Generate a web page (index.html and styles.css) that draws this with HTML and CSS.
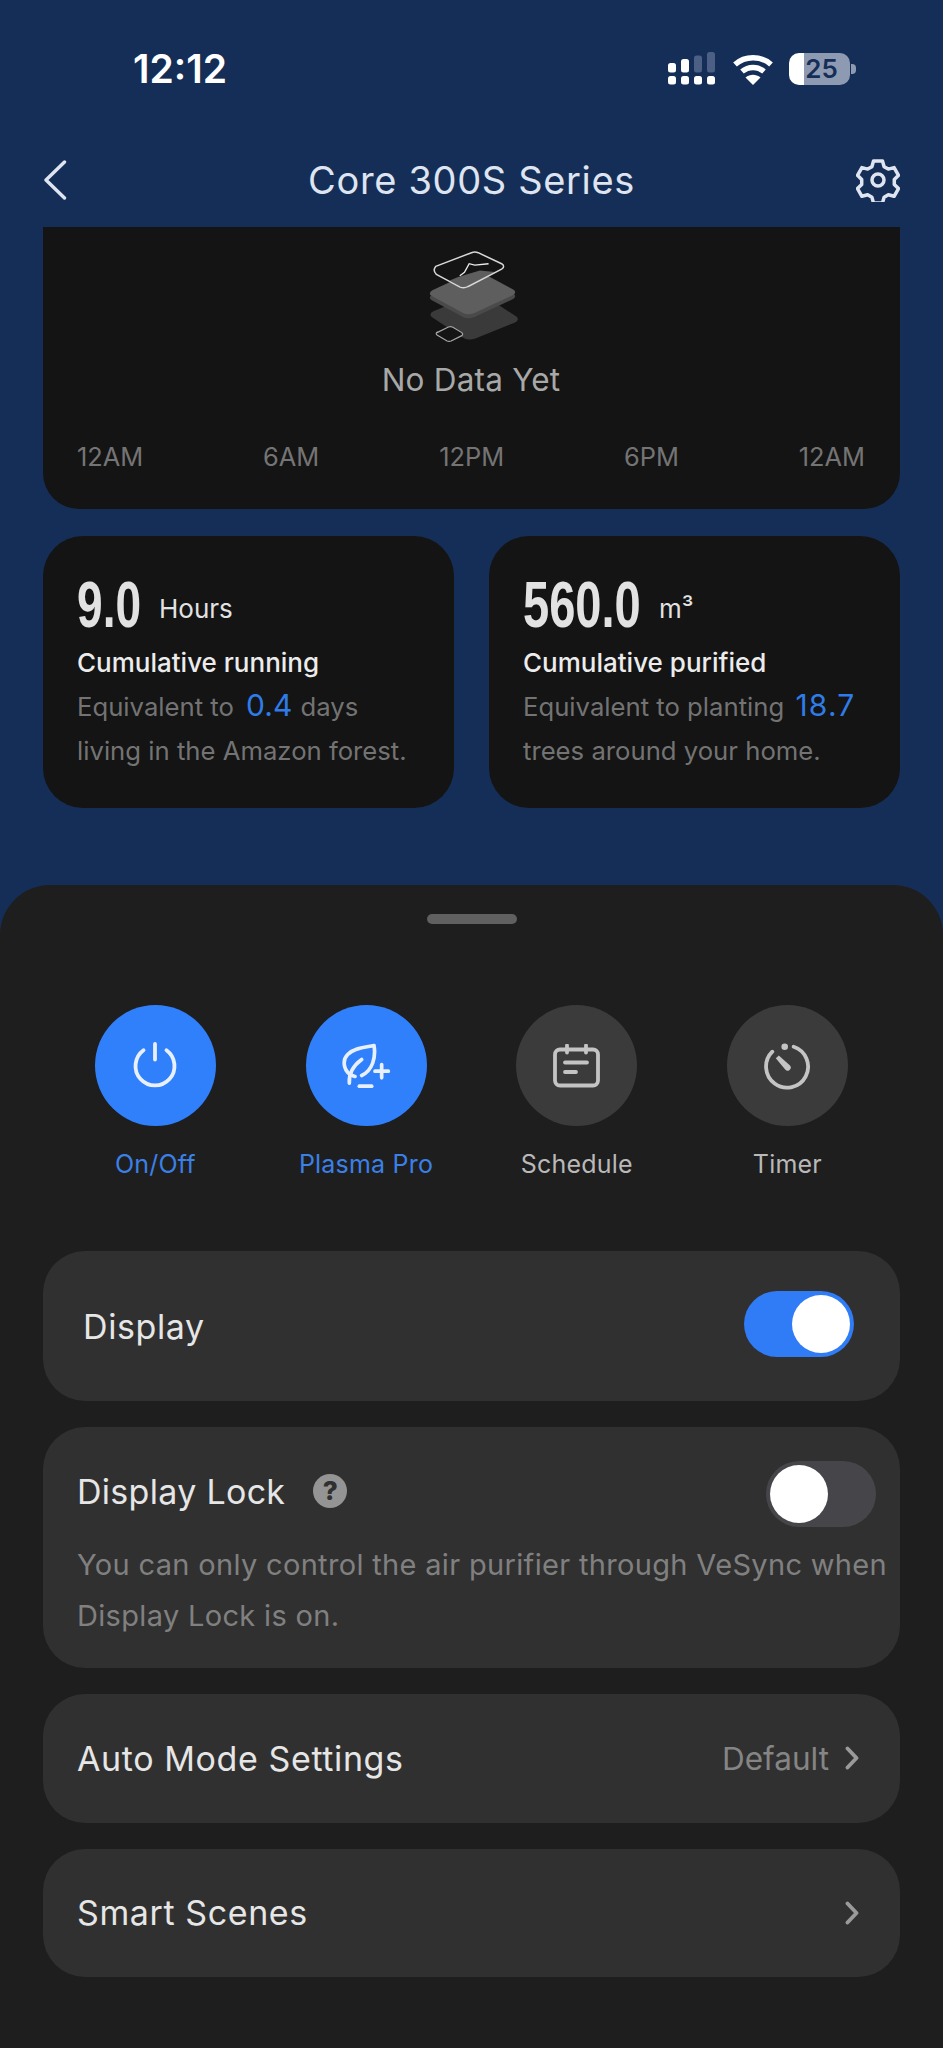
FILE: index.html
```html
<!DOCTYPE html>
<html lang="en">
<head>
<meta charset="utf-8">
<title>Core 300S Series</title>
<link rel="stylesheet" href="styles.css">
</head>
<body>
<div class="app">
  <header class="statusbar">
    <span class="time">12:12</span>
    <div class="status-icons">
      <svg class="signal" width="48" height="34" viewBox="0 0 48 34"><g fill="#fff"><rect x="0" y="24" width="8" height="8.500" rx="2.500"/><rect x="13" y="24" width="8" height="8.500" rx="2.500"/><rect x="26" y="24" width="8" height="8.500" rx="2.500"/><rect x="39" y="24" width="8" height="8.500" rx="2.500"/><rect x="0" y="11" width="8" height="9.500" rx="2.500"/><rect x="13" y="7" width="8" height="13.500" rx="2.500"/></g><g fill="#4b6084"><rect x="26" y="3.500" width="8" height="17" rx="2.500"/><rect x="39" y="0" width="8" height="20.500" rx="2.500"/></g></svg>
      <svg class="wifi" width="42" height="32" viewBox="0 0 42 32"><g fill="none" stroke="#fff" stroke-width="5.500"><path d="M3 11.500C13 2.500 29 2.500 39 11.500"/><path d="M10 18.500C16.500 13 25.500 13 32 18.500"/></g><path d="M13.500 24.500C18 20.800 24 20.800 28.500 24.500L21 32Z" fill="#fff"/></svg>
      <div class="battery"><span class="battery-num">25</span><i class="battery-nub"></i></div>
    </div>
  </header>
  <nav class="nav">
    <svg class="back" width="24" height="40" viewBox="0 0 24 40"><path d="M21.500 2 3 20l18.500 18" fill="none" stroke="#dfe5f0" stroke-width="3.400" stroke-linecap="round" stroke-linejoin="round"/></svg>
    <h1 class="title">Core 300S Series</h1>
    <svg class="gear" width="44" height="44" viewBox="0 0 44 44"><g fill="none" stroke="#dfe5f0" stroke-width="3.500" stroke-linejoin="round"><path d="M17.500 3h9l1.600 5.700 4.200 2.400 5.800-1.500 4.400 7.700-4.200 4.200v4.900l4.200 4.200-4.400 7.700-5.800-1.500-4.200 2.400-1.600 5.700h-9l-1.600-5.700-4.200-2.400-5.800 1.500-4.400-7.700 4.200-4.200v-4.900L1.500 17.300l4.400-7.700 5.800 1.500 4.200-2.400Z"/><circle cx="22" cy="22" r="6"/></g></svg>
  </nav>
  <section class="chart">
    <svg class="empty-art" width="97" height="99" viewBox="130 50 290 296">
      <rect width="1" height="1" rx=".13" transform="matrix(158 -64 124 82 142 250)" fill="#3a3a3a"/>
      <rect width="1" height="1" rx=".13" transform="matrix(150 -70 126 68 140 200)" fill="#4a4a4a"/>
      <rect width="1" height="1" rx=".13" transform="matrix(150 -70 126 68 140 188)" fill="#5e5e5e"/>
      <path d="M168 108 275 67q10-4 20 0l70 33q12 8 0 16L265 168q-12 7-24 2L170 132q-12-12-2-24Z" fill="#141414"/>
      <path d="M210 150 240 168q12 5 25-2L345 125 300 120 235 140Z" fill="#5e5e5e"/>
      <path d="M168 108 275 67q10-4 20 0l70 33q12 8 0 16L265 168q-12 7-24 2L170 132q-12-12-2-24Z" fill="none" stroke="#d8d8d8" stroke-width="4.500"/>
      <path d="M240 136 254 126 268 100 285 104 326 100" fill="none" stroke="#ececec" stroke-width="4"/>
      <path d="M172 306 206 289q6-2 12 0l28 17q5 5 0 9l-32 16q-6 2-12 0l-30-18q-5-5 0-8Z" fill="#141414" stroke="#a8a8a8" stroke-width="3.500"/>
    </svg>
    <p class="empty-text">No Data Yet</p>
    <div class="axis"><span>12AM</span><span>6AM</span><span>12PM</span><span>6PM</span><span>12AM</span></div>
  </section>
  <section class="stats">
    <article class="stat">
      <div class="stat-head"><span class="stat-value stat-value-short">9.0</span><span class="stat-unit">Hours</span></div>
      <div class="stat-title">Cumulative running</div>
      <p class="stat-note">Equivalent to <b class="hl">0.4</b> days<br>living in the Amazon forest.</p>
    </article>
    <article class="stat">
      <div class="stat-head"><span class="stat-value stat-value-long">560.0</span><span class="stat-unit">m³</span></div>
      <div class="stat-title">Cumulative purified</div>
      <p class="stat-note">Equivalent to planting <b class="hl hl-wide">18.7</b><br>trees around your home.</p>
    </article>
  </section>
  <section class="sheet">
    <div class="handle"></div>
    <div class="actions">
      <div class="action on">
        <div class="circle"><svg width="48" height="48" viewBox="0 0 48 48"><g fill="none" stroke="#e8f0fe" stroke-width="3.800" stroke-linecap="round"><path d="M12.500 8.200a19.500 19.500 0 1 0 23 0"/><path d="M24 2v15.500"/></g></svg></div>
        <span class="action-label">On/Off</span>
      </div>
      <div class="action on">
        <div class="circle"><svg width="50" height="47" viewBox="783 155 150 140"><g fill="none" stroke="#e8f0fe" stroke-width="11" stroke-linecap="round" stroke-linejoin="round"><path d="M825 258C790 250 785 210 803 192 825 170 860 170 882 165 888 200 878 240 845 255"/><path d="M808 278C806 248 820 225 845 207"/><path d="M905 222v40M885 242h40"/><path d="M838 287h37"/></g></svg></div>
        <span class="action-label">Plasma Pro</span>
      </div>
      <div class="action">
        <div class="circle"><svg width="48" height="44" viewBox="0 0 48 44"><g fill="none" stroke="#c4c4c4" stroke-width="3.800" stroke-linecap="round" stroke-linejoin="round"><rect x="2" y="5.500" width="43" height="36" rx="5"/><path d="M14 1.500v7M33 1.500v7M12 18.500h22M12 28h11"/></g></svg></div>
        <span class="action-label">Schedule</span>
      </div>
      <div class="action">
        <div class="circle"><svg width="48" height="48" viewBox="0 0 48 48"><path d="M30.700 4.700A21 21 0 1 1 9.300 9.700" fill="none" stroke="#c4c4c4" stroke-width="3.800" stroke-linecap="round"/><circle cx="21.700" cy="4.700" r="3.300" fill="#c4c4c4"/><path d="M12.800 16.200 15.800 13.600 27 23.500a3 3 0 0 1-4.800 4Z" fill="#c4c4c4"/></svg></div>
        <span class="action-label">Timer</span>
      </div>
    </div>
    <div class="rows">
      <div class="row row-display">
        <span class="row-name">Display</span>
        <span class="switch switch-on"><i class="knob"></i></span>
      </div>
      <div class="row-lock">
        <div class="lock-head">
          <span class="row-name lock-name">Display Lock</span>
          <span class="help">?</span>
          <span class="switch switch-off"><i class="knob"></i></span>
        </div>
        <p class="lock-note">You can only control the air purifier through VeSync when<br>Display Lock is on.</p>
      </div>
      <div class="row">
        <span class="row-name">Auto Mode Settings</span>
        <span class="row-end"><span class="row-value">Default</span><svg class="chev" width="14" height="24" viewBox="0 0 14 24"><path d="M2.500 2.500 11.500 12l-9 9.500" fill="none" stroke="#9a9a9a" stroke-width="3.800" stroke-linecap="round" stroke-linejoin="round"/></svg></span>
      </div>
      <div class="row">
        <span class="row-name">Smart Scenes</span>
        <span class="row-end"><svg class="chev" width="14" height="24" viewBox="0 0 14 24"><path d="M2.500 2.500 11.500 12l-9 9.500" fill="none" stroke="#9a9a9a" stroke-width="3.800" stroke-linecap="round" stroke-linejoin="round"/></svg></span>
      </div>
    </div>
  </section>
</div>
</body>
</html>
```
FILE: styles.css
```css
* { box-sizing: border-box; }
html, body { margin: 0; padding: 0; }
body {
  background: #152e57;
  font-family: Inter, "Noto Sans", sans-serif;
  color: #e8e8e8;
}
.app {
  width: 943px;
  height: 2048px;
  overflow: hidden;
  display: flex;
  flex-direction: column;
}
.statusbar {
  height: 134px;
  padding: 3px 93px 0 133px;
  display: flex;
  justify-content: space-between;
  align-items: center;
  flex: none;
}
.time { font-size: 39px; font-weight: 600; color: #fff; }
.status-icons { display: flex; align-items: center; }
.signal { margin-right: 16px; }
.wifi { margin-right: 15px; }
.battery {
  width: 61px;
  height: 32px;
  padding-left: 4px;
  border-radius: 10px;
  background: linear-gradient(90deg, #fff 0 15px, #8d9ab2 15px);
  position: relative;
  text-align: center;
  color: #152e57;
  font-size: 26px;
  line-height: 32px;
  font-weight: 600;
}
.battery-nub {
  position: absolute;
  right: -6px;
  top: 11px;
  width: 5px;
  height: 10px;
  border-radius: 0 4px 4px 0;
  background: #8d9ab2;
}
.nav {
  height: 93px;
  flex: none;
  padding: 0 43px 2px 43px;
  display: grid;
  grid-template-columns: 1fr auto 1fr;
  align-items: center;
}
.gear { justify-self: end; }
.title {
  margin: 0;
  font-size: 38px;
  font-weight: 400;
  color: #dfe5f0;
  letter-spacing: 0.65px;
}
.chart {
  height: 282px;
  flex: none;
  margin: 0 43px;
  background: #141414;
  border-radius: 0 0 36px 36px;
  padding: 20px 35px 0 34px;
  display: flex;
  flex-direction: column;
  align-items: center;
}
.empty-art { display: block; }
.empty-text { margin: 15px 0 0; font-size: 31.500px; line-height: 38px; color: #a8a8a8; letter-spacing: 0.2px; }
.axis {
  align-self: stretch;
  display: flex;
  justify-content: space-between;
  margin-top: 43px;
  font-size: 25.400px;
  line-height: 30px;
  color: #747474;
}
.stats {
  flex: none;
  margin: 27px 43px 0;
  display: grid;
  grid-template-columns: 1fr 1fr;
  gap: 35px;
}
.stat {
  height: 272px;
  background: #141414;
  border-radius: 40px;
  padding: 40px 20px 0 34px;
}
.stat-head { display: flex; align-items: flex-end; height: 58px; }
.stat-value {
  font-family: "Liberation Sans", sans-serif;
  font-size: 64px;
  line-height: 58px;
  font-weight: 700;
  color: #e2e2e2;
  transform: scaleX(.72);
  transform-origin: left center;
  white-space: nowrap;
}
.stat-value-short { width: 82px; }
.stat-value-long { width: 136px; transform: scaleX(.735); }
.stat-unit { font-size: 26px; line-height: 32px; color: #e2e2e2; margin-bottom: 9px; }
.stat-title { margin-top: 11px; font-size: 26px; line-height: 36px; font-weight: 500; color: #ececec; }
.stat-note { margin: 2px 0 0; font-size: 25.700px; line-height: 44px; color: #737373; white-space: nowrap; }
.hl { font-weight: 400; font-size: 30px; color: #2f7ce8; margin: 0 1px 0 5px; }
.hl-wide { letter-spacing: 1.2px; margin-left: 4px; }
.sheet {
  flex: 1;
  margin-top: 77px;
  background: #1e1e1e;
  border-radius: 50px 50px 0 0;
  display: flex;
  flex-direction: column;
  padding-top: 29px;
}
.handle {
  width: 90px;
  height: 10px;
  border-radius: 5px;
  background: #606060;
  align-self: center;
  flex: none;
}
.actions {
  margin-top: 81px;
  padding-left: 50px;
  display: grid;
  grid-template-columns: repeat(4, 210.700px);
}
.action { display: flex; flex-direction: column; align-items: center; color: #b9b9b9; }
.circle {
  width: 121px;
  height: 121px;
  border-radius: 50%;
  background: #3b3b3b;
  display: flex;
  align-items: center;
  justify-content: center;
}
.action-label { margin-top: 22px; font-size: 25px; line-height: 32px; white-space: nowrap; letter-spacing: 0.2px; }
.action.on { color: #3b80e6; }
.action.on .circle { background: #3180fb; }
.rows {
  margin: 71px 43px 0;
  display: flex;
  flex-direction: column;
  gap: 26px;
}
.row {
  height: 128.500px;
  background: #303030;
  border-radius: 42px;
  padding: 0 41px 0 34px;
  display: flex;
  align-items: center;
  justify-content: space-between;
}
.row-display { height: 150px; padding: 0 46px 0 40px; }
.row-display .switch { margin-bottom: 5px; }
.row-name { font-size: 34px; color: #e6e6e6; letter-spacing: 0.6px; }
.lock-name { letter-spacing: 0.3px; }
.row-end { display: flex; align-items: center; gap: 16px; }
.row-value { font-size: 31.500px; color: #858585; }
.chev { display: block; }
.switch {
  width: 110px;
  height: 66px;
  border-radius: 33px;
  display: block;
  position: relative;
  flex: none;
}
.knob {
  position: absolute;
  top: 4px;
  width: 58px;
  height: 58px;
  border-radius: 50%;
  background: #fff;
}
.switch-on { background: #2f7cf6; }
.switch-on .knob { right: 4px; }
.switch-off { background: #46464a; margin-left: auto; }
.switch-off .knob { left: 4px; }
.row-lock {
  height: 241px;
  background: #303030;
  border-radius: 42px;
  padding: 34px 0 0 34px;
}
.lock-head { display: flex; align-items: center; padding-right: 24px; }
.lock-name { margin-bottom: 6px; }
.help {
  width: 34px;
  height: 34px;
  margin: 0 0 6px 28px;
  border-radius: 50%;
  background: #949494;
  color: #303030;
  font-size: 26px;
  line-height: 34px;
  font-weight: 800;
  text-align: center;
}
.lock-note {
  margin: 11.500px 0 0;
  font-size: 29px;
  line-height: 51px;
  color: #808080;
  white-space: nowrap;
  letter-spacing: 0.33px;
}
```
